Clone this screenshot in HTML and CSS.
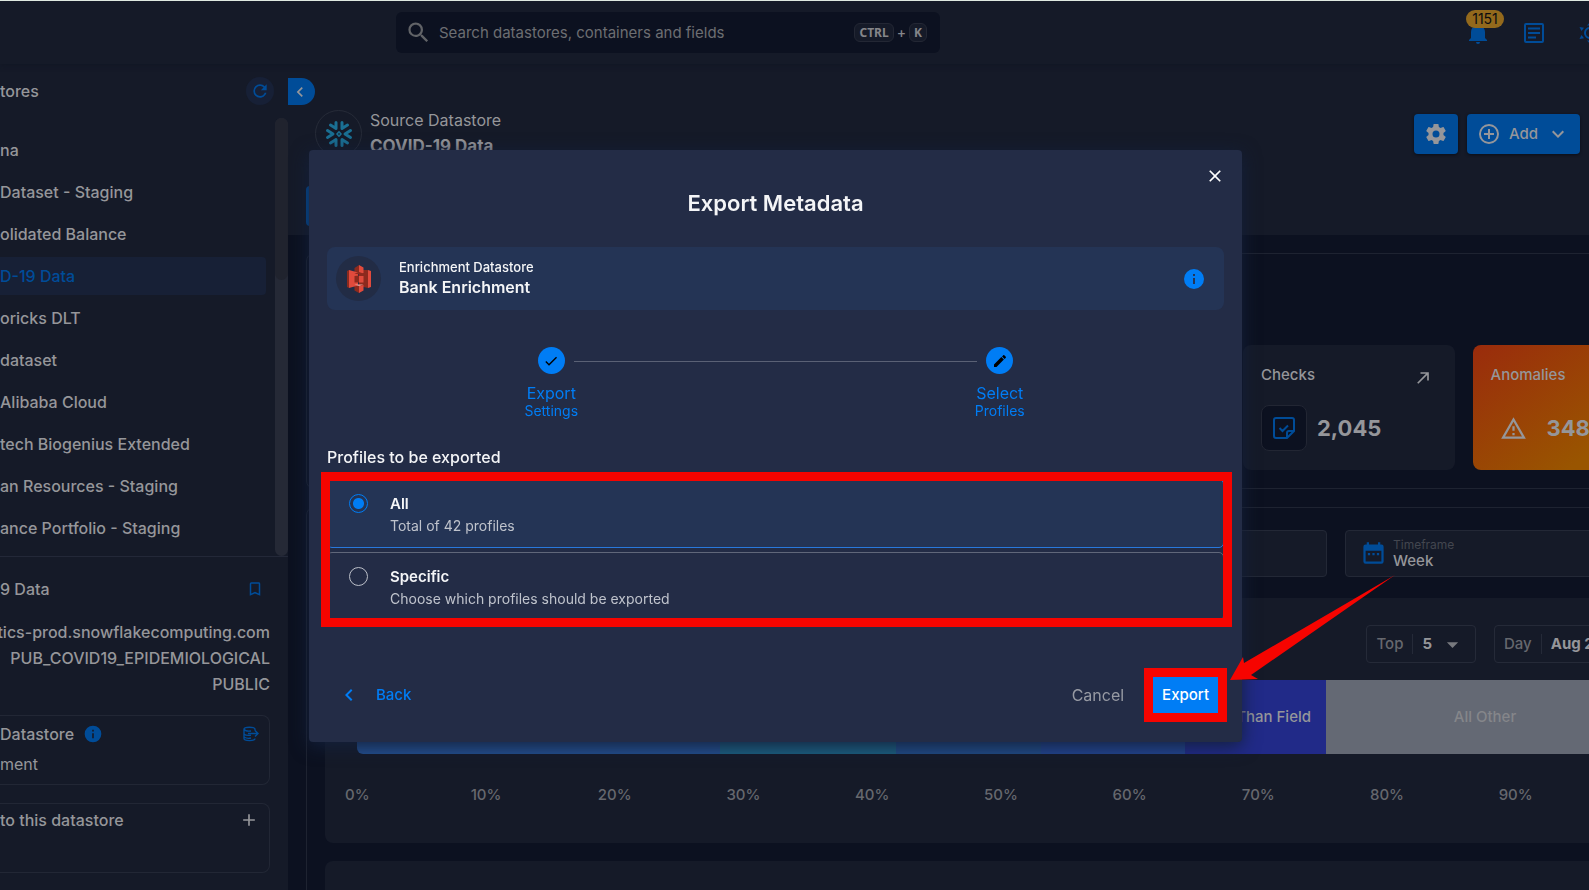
FILE: index.html
```html
<!DOCTYPE html>
<html lang="en">
<head>
<meta charset="utf-8">
<title>Export Metadata</title>
<meta name="viewport" content="width=device-width, initial-scale=1">
<link rel="stylesheet" href="styles.css">
</head>
<body>
<svg class="sprite" aria-hidden="true">
  <symbol id="i-search" viewBox="0 0 24 24"><path d="M9.5,3A6.5,6.5 0 0,1 16,9.5C16,11.11 15.41,12.59 14.44,13.73L14.71,14H15.5L20.5,19L19,20.5L14,15.5V14.71L13.73,14.44C12.59,15.41 11.11,16 9.5,16A6.5,6.5 0 0,1 3,9.5A6.5,6.5 0 0,1 9.5,3M9.5,5C7,5 5,7 5,9.5C5,12 7,14 9.5,14C12,14 14,12 14,9.5C14,7 12,5 9.5,5Z"/></symbol>
  <symbol id="i-refresh" viewBox="0 0 24 24"><path d="M17.65,6.35C16.2,4.9 14.21,4 12,4A8,8 0 0,0 4,12A8,8 0 0,0 12,20C15.73,20 18.84,17.45 19.73,14H17.65C16.83,16.33 14.61,18 12,18A6,6 0 0,1 6,12A6,6 0 0,1 12,6C13.66,6 15.14,6.69 16.22,7.78L13,11H20V4L17.65,6.35Z"/></symbol>
  <symbol id="i-left" viewBox="0 0 24 24"><path d="M15.41,16.58L10.83,12L15.41,7.41L14,6L8,12L14,18L15.41,16.58Z"/></symbol>
  <symbol id="i-down" viewBox="0 0 24 24"><path d="M7.41,8.58L12,13.17L16.59,8.58L18,10L12,16L6,10L7.41,8.58Z"/></symbol>
  <symbol id="i-caret" viewBox="0 0 24 24"><path d="M7,10L12,15L17,10H7Z"/></symbol>
  <symbol id="i-cog" viewBox="0 0 24 24"><path d="M12,15.5A3.5,3.5 0 0,1 8.5,12A3.5,3.5 0 0,1 12,8.5A3.5,3.5 0 0,1 15.5,12A3.5,3.5 0 0,1 12,15.5M19.43,12.97C19.47,12.65 19.5,12.33 19.5,12C19.5,11.67 19.47,11.34 19.43,11L21.54,9.37C21.73,9.22 21.78,8.95 21.66,8.73L19.66,5.27C19.54,5.05 19.27,4.96 19.05,5.05L16.56,6.05C16.04,5.66 15.5,5.32 14.87,5.07L14.5,2.42C14.46,2.18 14.25,2 14,2H10C9.75,2 9.54,2.18 9.5,2.42L9.13,5.07C8.5,5.32 7.96,5.66 7.44,6.05L4.95,5.05C4.73,4.96 4.46,5.05 4.34,5.27L2.34,8.73C2.21,8.95 2.27,9.22 2.46,9.37L4.57,11C4.53,11.34 4.5,11.67 4.5,12C4.5,12.33 4.53,12.65 4.57,12.97L2.46,14.63C2.27,14.78 2.21,15.05 2.34,15.27L4.34,18.73C4.46,18.95 4.73,19.03 4.95,18.95L7.44,17.94C7.96,18.34 8.5,18.68 9.13,18.93L9.5,21.58C9.54,21.82 9.75,22 10,22H14C14.25,22 14.46,21.82 14.5,21.58L14.87,18.93C15.5,18.67 16.04,18.34 16.56,17.94L19.05,18.95C19.27,19.03 19.54,18.95 19.66,18.73L21.66,15.27C21.78,15.05 21.73,14.78 21.54,14.63L19.43,12.97Z"/></symbol>
  <symbol id="i-add" viewBox="0 0 24 24"><path d="M12,20C7.59,20 4,16.41 4,12C4,7.59 7.59,4 12,4C16.41,4 20,7.59 20,12C20,16.41 16.41,20 12,20M12,2A10,10 0 0,0 2,12A10,10 0 0,0 12,22A10,10 0 0,0 22,12A10,10 0 0,0 12,2M13,7H11V11H7V13H11V17H13V13H17V11H13V7Z"/></symbol>
  <symbol id="i-bell" viewBox="0 0 24 24"><path d="M21,19V20H3V19L5,17V11C5,7.9 7.03,5.17 10,4.29C10,4.19 10,4.1 10,4A2,2 0 0,1 12,2A2,2 0 0,1 14,4C14,4.1 14,4.19 14,4.29C16.97,5.17 19,7.9 19,11V17L21,19M14,21A2,2 0 0,1 12,23A2,2 0 0,1 10,21"/></symbol>
  <symbol id="i-info" viewBox="0 0 24 24"><path d="M13,9H11V7H13M13,17H11V11H13M12,2A10,10 0 0,0 2,12A10,10 0 0,0 12,22A10,10 0 0,0 22,12A10,10 0 0,0 12,2Z"/></symbol>
  <symbol id="i-check" viewBox="0 0 24 24"><path d="M21,7L9,19L3.5,13.5L4.91,12.09L9,16.17L19.59,5.59L21,7Z"/></symbol>
  <symbol id="i-pencil" viewBox="0 0 24 24"><path d="M20.71,7.04C21.1,6.65 21.1,6 20.71,5.63L18.37,3.29C18,2.9 17.35,2.9 16.96,3.29L15.12,5.12L18.87,8.87M3,17.25V21H6.75L17.81,9.93L14.06,6.18L3,17.25Z"/></symbol>
  <symbol id="i-close" viewBox="0 0 24 24"><path d="M19,6.41L17.59,5L12,10.59L6.41,5L5,6.41L10.59,12L5,17.59L6.41,19L12,13.41L17.59,19L19,17.59L13.41,12L19,6.41Z"/></symbol>
  <symbol id="i-plus" viewBox="0 0 24 24"><path d="M19,13H13V19H11V13H5V11H11V5H13V11H19V13Z"/></symbol>
  <symbol id="i-bookmark" viewBox="0 0 24 24"><path d="M17,18L12,15.82L7,18V5H17M17,3H7A2,2 0 0,0 5,5V21L12,18L19,21V5C19,3.89 18.1,3 17,3Z"/></symbol>
  <symbol id="i-alert" viewBox="0 0 24 24"><path d="M12,2L1,21H23M12,6L19.53,19H4.47M11,10V14H13V10M11,16V18H13V16"/></symbol>
  <symbol id="i-open" viewBox="0 0 24 24"><path d="M5,17.59L15.59,7H9V5H19V15H17V8.41L6.41,19L5,17.59Z"/></symbol>
</svg>

<header class="topbar">
  <div class="search">
    <svg class="icon-27"><use href="#i-search"/></svg>
    <input class="search-input" type="text" aria-label="Search" placeholder="Search datastores, containers and fields">
    <span class="keys"><kbd>CTRL</kbd><span>+</span><kbd>K</kbd></span>
  </div>
  <div class="top-actions">
    <button class="plain bell" aria-label="Notifications"><svg class="icon-24"><use href="#i-bell"/></svg><span class="badge">1151</span></button>
    <button class="plain" aria-label="News"><svg class="icon-24" viewBox="0 0 24 24"><path fill-rule="evenodd" d="M4 2H20A2 2 0 0 1 22 4V20A2 2 0 0 1 20 22H4A2 2 0 0 1 2 20V4A2 2 0 0 1 4 2ZM4 4V20H20V4ZM6 6.5H18V8.500H6ZM6 11H18V13H6ZM6 15.500H14V17.500H6Z"/></svg></button>
    <button class="plain" aria-label="Theme"><svg class="icon-24" viewBox="0 0 24 24"><circle cx="12" cy="12" r="5" fill="none" stroke="currentColor" stroke-width="2"/><path d="M12 1L15 4.500H9ZM12 23L9 19.500H15ZM1.500 6L6 6.800L3.500 10ZM1.500 18L3.500 14L6 17.200ZM22.500 6L18 6.800L20.500 10ZM22.500 18L20.500 14L18 17.200Z"/></svg></button>
  </div>
</header>

<div class="shell">
  <aside class="sidebar">
    <div class="side-head">
      <h2 class="side-title">tores</h2>
      <button class="refresh" aria-label="Refresh"><svg class="icon-20"><use href="#i-refresh"/></svg></button>
    </div>
    <div class="side-list">
      <nav class="stores" aria-label="Datastores">
        <a href="#" class="store">na</a>
        <a href="#" class="store">Dataset - Staging</a>
        <a href="#" class="store">olidated Balance</a>
        <a href="#" class="store active">D-19 Data</a>
        <a href="#" class="store">oricks DLT</a>
        <a href="#" class="store">dataset</a>
        <a href="#" class="store">Alibaba Cloud</a>
        <a href="#" class="store">tech Biogenius Extended</a>
        <a href="#" class="store">an Resources - Staging</a>
        <a href="#" class="store">ance Portfolio - Staging</a>
      </nav>
      <div class="track"><div class="thumb"></div></div>
    </div>
    <section class="details">
      <div class="detail-head"><span>9 Data</span><button class="plain" aria-label="Bookmark"><svg class="icon-18"><use href="#i-bookmark"/></svg></button></div>
      <div class="detail-rows">
        <span>tics-prod.snowflakecomputing.com</span>
        <span>PUB_COVID19_EPIDEMIOLOGICAL</span>
        <span>PUBLIC</span>
      </div>
      <div class="side-card linked">
        <div class="side-card-row"><span>Datastore</span><svg class="icon-20 blue"><use href="#i-info"/></svg>
          <button class="plain end" aria-label="Open enrichment datastore"><svg class="icon-16" viewBox="0 0 16 16" fill="none" stroke="currentColor" stroke-width="1.400"><path d="M12 4.500V3.200C12 0.500 1 0.500 1 3.200V12.500C1 15.300 12 15.300 12 12.500M1 3.200C2 5 5 5.400 8 5M1 7.800C2 9.200 5 9.600 8 9.200M1 11C3 12.300 6 12.500 8 12M5 7.500H15M12 4.500L15 7.500L12 10.500"/></svg></button></div>
        <div class="side-card-sub">ment</div>
      </div>
      <div class="side-card">
        <div class="side-card-row"><span>to this datastore</span><button class="plain end light" aria-label="Add"><svg class="icon-20"><use href="#i-plus"/></svg></button></div>
      </div>
    </section>
  </aside>

  <main class="main">
    <div class="page-head">
      <button class="collapse" aria-label="Collapse sidebar"><svg class="icon-20"><use href="#i-left"/></svg></button>
      <div class="source">
        <div class="source-icon">
          <svg class="flake" viewBox="-14 -14 28 28" fill="none" stroke="#1a6f93" stroke-width="3" stroke-linecap="round" stroke-linejoin="round"><rect x="-1.500" y="-1.500" width="3" height="3" stroke-width="1.500" transform="rotate(45)"/>
            <path d="M-11.500 -3.500L-6 0L-11.500 3.500M11.500 -3.500L6 0L11.500 3.500M-3 -11.500V-5.500L-8.500 -9M3 -11.500V-5.500L8.500 -9M-3 11.500V5.500L-8.500 9M3 11.500V5.500L8.500 9"/></svg>
        </div>
        <div>
          <div class="source-label">Source Datastore</div>
          <div class="source-name">COVID-19 Data</div>
        </div>
      </div>
      <div class="head-actions">
        <button class="btn-dim" aria-label="Settings"><svg class="icon-24"><use href="#i-cog"/></svg></button>
        <button class="btn-dim"><svg class="icon-24"><use href="#i-add"/></svg><span class="add-text">Add</span><svg class="icon-24"><use href="#i-down"/></svg></button>
      </div>
      <div class="tab"></div>
    </div>

    <div class="content">
      <section class="panel stats">
        <div class="stat"></div><div class="stat"></div><div class="stat"></div><div class="stat"></div>
        <div class="stat">
          <div class="stat-top"><span>Checks</span><svg class="icon-20"><use href="#i-open"/></svg></div>
          <div class="stat-main">
            <span class="stat-icon"><svg class="icon-24" viewBox="0 0 24 24" fill="none" stroke="currentColor" stroke-width="2"><path d="M15 22H4A2 2 0 0 1 2 20V4A2 2 0 0 1 4 2H20A2 2 0 0 1 22 4V15ZM15 22V17A2 2 0 0 1 17 15H22M7.500 12L10.500 15L16 9.500"/></svg></span>
            <strong>2,045</strong>
          </div>
        </div>
        <div class="stat hot">
          <div class="stat-top"><span>Anomalies</span></div>
          <div class="stat-main"><span class="stat-icon bare"><svg class="icon-27"><use href="#i-alert"/></svg></span><strong>348</strong></div>
        </div>
      </section>

      <section class="panel overview">
        <div class="fields">
          <div class="field"></div>
          <div class="field">
            <svg class="icon-27 blue" viewBox="0 0 24 24"><path fill-rule="evenodd" d="M5 4H6V2H8V4H16V2H18V4H19A2 2 0 0 1 21 6V19A2 2 0 0 1 19 21H5A2 2 0 0 1 3 19V6A2 2 0 0 1 5 4ZM5 9.500V19H19V9.500ZM7 11.500H9V13.500H7ZM11 11.500H13V13.500H11ZM15 11.500H17V13.500H15Z"/></svg>
            <div><div class="field-label">Timeframe</div><div class="field-value">Week</div></div>
          </div>
        </div>
        <div class="chart-card">
          <div class="chart-tools">
            <button class="picker top-n"><span class="muted">Top</span><span class="picker-value">5</span><svg class="icon-27"><use href="#i-caret"/></svg></button>
            <button class="picker day"><span class="muted">Day</span><span class="picker-value">Aug 2</span></button>
          </div>
          <div class="bar">
            <span class="seg seg-1"></span><span class="seg seg-2"></span><span class="seg seg-3"></span><span class="seg seg-4"></span>
            <span class="seg seg-5">Than Field</span><span class="seg seg-6">All Other</span>
          </div>
          <div class="axis"><span>0%</span><span>10%</span><span>20%</span><span>30%</span><span>40%</span><span>50%</span><span>60%</span><span>70%</span><span>80%</span><span>90%</span></div>
        </div>
        <div class="chart-card next"></div>
      </section>
    </div>
  </main>
</div>

<div class="overlay">
  <form class="modal" role="dialog" aria-labelledby="modal-title">
    <button type="button" class="plain close" aria-label="Close"><svg class="icon-20"><use href="#i-close"/></svg></button>
    <h1 class="modal-title" id="modal-title">Export Metadata</h1>
    <div class="enrich">
      <span class="enrich-icon"><svg class="bucket" viewBox="0 0 26 28">
        <path fill="#8c2a1e" d="M1 6L3 5V23L1 22ZM13 5L22 5V23L13 21ZM8.500 3L13 0V9L8.500 8ZM8.500 20L13 21V28L8.500 25.500Z"/>
        <path fill="#e04a3c" d="M3 5L12 7.500V20.500L3 23ZM22 5L25 6V22L22 23ZM13 0L17.500 2.500V8L13 9ZM13 21L17.500 20V25.500L13 28ZM13 11H17.500V17.500H13Z"/>
        <path fill="#8c2a1e" d="M8.500 11L13 10.500V17.500H8.500ZM8.500 8.500L13 7L17.500 8.500L13 9.500Z"/><path fill="#eda79d" d="M8.500 19.500H17.500L13 21Z"/></svg></span>
      <div class="enrich-text"><div class="enrich-label">Enrichment Datastore</div><div class="enrich-name">Bank Enrichment</div></div>
      <svg class="icon-24 bright"><use href="#i-info"/></svg>
    </div>
    <ol class="steps">
      <li class="step"><span class="dot"><svg class="icon-16"><use href="#i-check"/></svg></span><span class="step-name">Export</span><span class="step-sub">Settings</span></li>
      <li class="step"><span class="dot"><svg class="icon-16"><use href="#i-pencil"/></svg></span><span class="step-name">Select</span><span class="step-sub">Profiles</span></li>
    </ol>
    <h2 class="group-title">Profiles to be exported</h2>
    <div class="options">
      <label class="option chosen"><input class="radio" type="radio" name="profiles" checked><span><span class="option-name">All</span><span class="option-sub">Total of 42 profiles</span></span></label>
      <label class="option"><input class="radio" type="radio" name="profiles"><span><span class="option-name">Specific</span><span class="option-sub">Choose which profiles should be exported</span></span></label>
      <div class="mark mark-options"></div>
    </div>
    <div class="modal-foot">
      <button type="button" class="plain back"><svg class="icon-24"><use href="#i-left"/></svg>Back</button>
      <button type="button" class="plain cancel">Cancel</button>
      <div class="export-wrap">
        <button type="submit" class="export">Export</button>
        <div class="mark mark-export"></div>
        <svg class="arrow" viewBox="0 0 166 105"><path fill="#f60400" d="M0 105L13 82L14 88L165 0L21 100L28 104Z"/></svg>
      </div>
    </div>
  </form>
</div>
</body>
</html>
```

FILE: styles.css
```css
* { box-sizing: border-box; }
html, body { height: 100%; }
body {
  margin: 0;
  display: flex;
  flex-direction: column;
  overflow: hidden;
  background: #0c1120;
  border-top: 1px solid #dfe9e1;
  color: #95969a;
  font: 500 15px/20px Inter, "Noto Sans", sans-serif;
}
button, input { font: inherit; color: inherit; }
h1, h2, ol { margin: 0; padding: 0; }
svg { display: block; flex: none; }
svg:not([fill]) { fill: currentColor; }
.sprite { display: none; }
.icon-16 { width: 16px; height: 16px; }
.icon-18 { width: 18px; height: 18px; }
.icon-20 { width: 20px; height: 20px; }
.icon-24 { width: 24px; height: 24px; }
.icon-27 { width: 27px; height: 27px; }
.blue { color: #004c98; }
.bright { color: #007df5; }
.plain { display: flex; align-items: center; padding: 0; border: 0; background: none; color: #004c98; }

/* Top bar */
.topbar {
  flex: none;
  display: flex;
  align-items: center;
  justify-content: space-between;
  height: 63px;
  padding-left: 396px;
  background: #151a28;
  position: relative;
  z-index: 1;
  box-shadow: 0 1px 5px #111624;
}
.search {
  display: flex;
  align-items: center;
  gap: 7px;
  width: 544px;
  height: 41px;
  padding: 0 13px 0 9px;
  border-radius: 6px;
  background: #0c1120;
  color: #616367;
}
.search-input { flex: 1; min-width: 0; padding: 0; border: 0; outline: 0; background: none; font-weight: 400; }
.search-input::placeholder { color: #6c6e72; opacity: 1; }
.keys { display: flex; align-items: center; gap: 3px; color: #85868a; font-size: 14px; }
kbd {
  padding: 0 4px;
  border: 1px solid #232734;
  border-radius: 6px;
  background: #151a28;
  font: 700 12px/17px "Noto Sans", sans-serif;
}
.top-actions { display: flex; gap: 32px; margin-right: -13px; }
.bell { position: relative; }
.badge {
  position: absolute;
  top: -11px;
  left: 0;
  width: 38px;
  border-radius: 9px;
  background: #93691c;
  color: #0c0c10;
  font-size: 14px;
  font-weight: 400;
  line-height: 18px;
}

/* Sidebar */
.shell { flex: 1; min-height: 0; display: flex; }
.sidebar { flex: none; width: 288px; display: flex; flex-direction: column; background: #151a28; font-size: 16px; }
.side-head { display: flex; align-items: center; justify-content: space-between; height: 54px; padding-right: 14px; }
.side-title { font-size: 16px; font-weight: 500; }
.refresh {
  display: grid;
  place-items: center;
  width: 28px;
  height: 28px;
  padding: 0;
  border: 0;
  border-radius: 50%;
  background: #172036;
  color: #004c98;
}
.side-list { display: flex; justify-content: space-between; border-bottom: 1px solid #232838; }
.stores { flex: 1; display: grid; gap: 4px; padding: 13px 9px 9px 0; }
.store { padding: 9px 0; border-radius: 0 4px 4px 0; color: inherit; text-decoration: none; white-space: nowrap; }
.store.active { background: #172036; color: #004c98; }
.track { width: 13px; border-radius: 7px; background: #252936; }
.thumb { height: 37%; border-radius: 7px; background: #20232e; }
.details { display: grid; grid-template-columns: minmax(0, 1fr); gap: 18px; padding: 22px 18px 0 0; }
.detail-head { display: flex; align-items: center; justify-content: space-between; padding-right: 6px; }
.detail-rows { display: grid; grid-template-columns: minmax(0, 1fr); gap: 6px; justify-items: end; padding: 5px 0 3px; white-space: nowrap; }
.side-card {
  height: 70px;
  padding: 6px 10px 0 0;
  border: 1px solid #222735;
  border-left: 0;
  border-radius: 0 8px 8px 0;
}
.side-card.linked { padding-top: 8px; }
.side-card-row { display: flex; align-items: center; gap: 9px; }
.side-card-sub { margin-top: 10px; font-weight: 400; }
.end { margin-left: auto; }
.light { color: #95969a; }

/* Main area */
.main { flex: 1; min-width: 0; overflow: hidden; }
.page-head { position: relative; height: 171px; padding: 46px 9px 0 27px; display: flex; align-items: flex-start; background: #151a28; }
.collapse {
  position: absolute;
  top: 14px;
  left: 0;
  width: 27px;
  height: 27px;
  padding: 0 0 0 2px;
  border: 0;
  border-radius: 0 14px 14px 0;
  background: #004c98;
}
.source { display: flex; gap: 8px; }
.source-icon { display: grid; place-items: center; width: 47px; height: 47px; border: 1px solid #262b38; border-radius: 50%; }
.flake { width: 28px; height: 28px; }
.source-label { font-size: 16px; font-weight: 400; }
.source-name { font-size: 17px; font-weight: 700; line-height: 32px; }
.head-actions { display: flex; gap: 9px; margin: 4px 0 0 auto; }
.btn-dim { display: flex; align-items: center; height: 40px; padding: 0 10px; border: 0; border-radius: 4px; background: #004c98; box-shadow: 0 1px 3px #0a0e18; }
.add-text { margin: 0 8px; }
.tab { position: absolute; left: 18px; top: 122px; width: 40px; height: 40px; border-radius: 4px; background: #004c98; }
.content { display: grid; gap: 18px; margin: 18px -114px 0 18px; }
.panel { border: 1px solid #1e2331; border-radius: 8px; }
.stats { display: grid; grid-template-columns: repeat(6, 1fr); gap: 18px; padding: 91px 18px 18px; }
.stat { height: 125px; padding: 20px 22px 0 18px; border-radius: 8px; background: #151a28; }
.stat-top { display: flex; justify-content: space-between; align-items: flex-start; height: 28px; }
.stat-top .icon-20 { margin-top: 3px; }
.stat-main { display: flex; align-items: center; gap: 10px; margin-top: 12px; }
.stat strong { font-size: 22px; font-weight: 700; }
.stat-icon { display: grid; place-items: center; width: 46px; height: 46px; border: 1px solid #222633; border-radius: 8px; background: #0c1120; color: #004c98; }
.stat-icon.bare { border-color: transparent; background: none; color: inherit; }
.hot { background: linear-gradient(145deg, #9a2b0c, #995500 70%); }
.overview { padding: 22px 18px; }
.fields { display: grid; grid-template-columns: 1002px 1fr; gap: 18px; }
.field { display: flex; align-items: center; gap: 6px; height: 47px; padding: 0 14px; border: 1px solid #232836; border-radius: 4px; background: #151a28; }
.field-label { color: #43464f; font-size: 12px; font-weight: 400; line-height: 14px; }
.field-value { line-height: 18px; }
.chart-card { margin-top: 21px; height: 245px; padding: 27px 40px 0 32px; border-radius: 8px; background: #151a28; }
.chart-card.next { margin-top: 18px; }
.chart-tools { display: flex; justify-content: flex-end; gap: 18px; }
.picker { display: flex; align-items: center; height: 38px; padding: 0 9px; border: 1px solid #252a38; border-radius: 4px; background: none; }
.picker-value { margin-left: 9px; padding-left: 9px; border-left: 1px solid #252a38; font-weight: 700; }
.muted { color: #66686e; }
.top-n svg { margin-left: 7px; color: #77797e; }
.day { width: 150px; }
.bar { display: grid; grid-template-columns: 363fr 176fr 145fr 144fr 141fr 318fr; height: 74px; margin-top: 17px; border-radius: 0 0 0 6px; overflow: hidden; }
.seg { display: flex; align-items: center; justify-content: center; }
.seg-1 { background: #24508f; }
.seg-2 { background: #1c6281; }
.seg-3 { background: #214c86; }
.seg-4 { background: #234590; }
.seg-5 { justify-content: flex-end; padding-right: 15px; background: #212a88; }
.seg-6 { background: #646974; color: #85868a; }
.axis { display: flex; margin: 31px 64px 0 -64px; color: #66686e; }
.axis span { flex: 1; text-align: center; }

/* Modal */
.overlay { position: fixed; inset: 0; z-index: 5; display: flex; align-items: center; justify-content: center; padding: 2px 38px 0 0; }
.modal {
  position: relative;
  width: 100%;
  max-width: 933px;
  padding: 41px 18px 27px;
  border-radius: 4px;
  background: #232c46;
  box-shadow: 0 4px 18px #13203c;
  color: #f4f5f7;
}
.close { position: absolute; top: 16px; right: 17px; color: #fff; }
.modal-title { font-size: 22px; font-weight: 600; line-height: 24px; text-align: center; }
.enrich { display: flex; align-items: center; gap: 18px; height: 63px; margin-top: 32px; padding: 0 18px 0 9px; border-radius: 8px; background: #243455; }
.enrich-icon { display: grid; place-items: center; width: 45px; height: 45px; border-radius: 50%; background: #222c45; }
.bucket { width: 26px; height: 28px; }
.enrich-text { flex: 1; padding-bottom: 3px; }
.enrich-label { font-size: 13px; }
.enrich-name { font-size: 16px; font-weight: 600; }
.steps { display: flex; margin-top: 37px; list-style: none; color: #007df5; font-weight: 400; }
.step { position: relative; flex: 1; display: flex; flex-direction: column; align-items: center; }
.step + .step::before {
  content: "";
  position: absolute;
  top: 14px;
  right: calc(50% + 23px);
  left: calc(-50% + 23px);
  border-top: 1px solid #5a6175;
}
.dot { display: grid; place-items: center; width: 27px; height: 27px; border-radius: 50%; background: #007df5; color: #000; }
.step-name { margin-top: 9px; font-size: 16px; }
.step-sub { font-size: 14px; line-height: 16px; }
.group-title { margin-top: 28px; font-size: 16px; font-weight: 500; line-height: 20px; }
.options { position: relative; display: grid; gap: 4px; margin-top: 12px; }
.option { display: flex; gap: 22px; height: 69px; padding: 14px 21px; border: 1px solid #60677a; border-radius: 5px; }
.option.chosen { background: #243455; border-color: #2878dc; }
.radio { appearance: none; flex: none; width: 19px; height: 19px; margin: 0; border: 1px solid #bcc0c9; border-radius: 50%; }
.radio:checked { border-color: #007df5; background: radial-gradient(circle, #007df5 5px, transparent 6px); }
.option-name { display: block; font-weight: 600; line-height: 19px; }
.option-sub { display: block; margin-top: 2px; color: #bfc3cc; font-size: 14px; font-weight: 400; line-height: 21px; }
.mark { position: absolute; border: 9px solid #f60400; pointer-events: none; }
.mark-options { inset: -7px -8px -6px -6px; }
.modal-foot { display: flex; align-items: center; margin-top: 54px; padding: 0 4px 0 10px; }
.back { gap: 15px; color: #007df5; }
.cancel { margin-left: auto; color: #979aa3; font-size: 16px; font-weight: 400; }
.export-wrap { position: relative; margin-left: 27px; }
.export { height: 40px; padding: 0 11px; border: 0; border-radius: 4px; background: #007df5; color: #fff; }
.mark-export { inset: -7px; }
.arrow { position: absolute; left: calc(100% + 10px); bottom: 35px; width: 166px; height: 105px; }
```
